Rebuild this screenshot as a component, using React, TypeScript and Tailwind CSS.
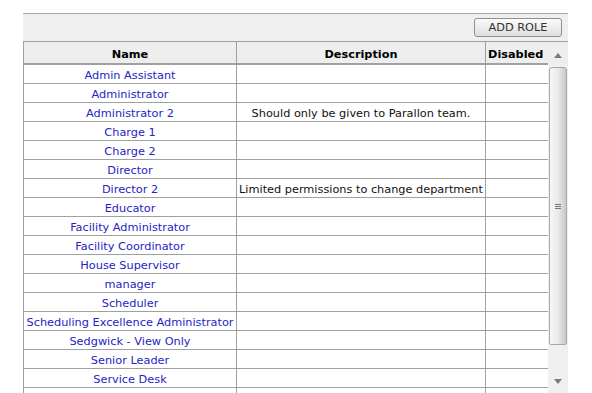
import React from "react"

type Role = { name: string; description?: string }

const roles: Role[] = [
	{ name: "Admin Assistant" },
	{ name: "Administrator" },
	{ name: "Administrator 2", description: "Should only be given to Parallon team." },
	{ name: "Charge 1" },
	{ name: "Charge 2" },
	{ name: "Director" },
	{ name: "Director 2", description: "Limited permissions to change department" },
	{ name: "Educator" },
	{ name: "Facility Administrator" },
	{ name: "Facility Coordinator" },
	{ name: "House Supervisor" },
	{ name: "manager" },
	{ name: "Scheduler" },
	{ name: "Scheduling Excellence Administrator" },
	{ name: "Sedgwick - View Only" },
	{ name: "Senior Leader" },
	{ name: "Service Desk" },
	{ name: "" },
]

function Scrollbar() {
	return (
		<div className="flex h-[351px] w-[20px] flex-col bg-[#f0f0f0]">
			<div className="flex h-[23px] items-center justify-center bg-[#eeeeee] pt-[3px]">
				<svg width="8" height="5" viewBox="0 0 8 5">
					<path d="M0 5 L4 0 L8 5 Z" fill="#7a7a7a" />
				</svg>
			</div>
			<div className="mx-[1px] mt-[2px] flex h-[278px] items-center justify-center rounded-t-[3px] rounded-b-[2px] border border-[#a9a9a9] bg-gradient-to-r from-[#f6f6f6] via-[#e9e9e9] to-[#c9c9c9]">
				<div className="flex flex-col gap-[1px]">
					<div className="h-[1px] w-[6px] bg-[#777]" />
					<div className="h-[1px] w-[6px] bg-[#777]" />
					<div className="h-[1px] w-[6px] bg-[#777]" />
				</div>
			</div>
			<div className="flex flex-1 justify-center pt-[34px]">
				<svg width="8" height="5" viewBox="0 0 8 5">
					<path d="M0 0 L8 0 L4 5 Z" fill="#7a7a7a" />
				</svg>
			</div>
		</div>
	)
}

export default function App() {
	return (
		<div
			className="h-[393px] w-[592px] overflow-hidden bg-white pl-[23px] pt-[13px] text-[11.3px]"
			style={{ fontFamily: "'DejaVu Sans', Verdana, sans-serif" }}
		>
			<div className="w-[545px]">
				<div className="flex h-[28px] items-center justify-end border-t border-[#a8a8a8] bg-[#efefef] pr-[6px]">
					<button
						type="button"
						className="h-[19px] w-[88px] rounded-[3px] border border-[#8f8f8f] bg-gradient-to-b from-[#fbfbfb] to-[#dedede] pt-[1px] text-[11.3px] leading-none text-[#333]"
					>
						ADD ROLE
					</button>
				</div>
				<div className="flex items-start border-t border-[#a0a0a0]">
					<div className="w-[525px] border-l border-[#a0a0a0]">
						<div className="flex h-[23px] border-b-2 border-[#a0a0a0] bg-[#eeeeee] font-bold text-black">
							<div className="flex w-[213px] items-center justify-center border-r border-[#a0a0a0] pt-[5px]">Name</div>
							<div className="flex w-[249px] items-center justify-center border-r border-[#a0a0a0] pt-[5px]">Description</div>
							<div className="flex flex-1 items-center pl-[2px] pt-[5px]">Disabled</div>
						</div>
						{roles.map((role, i) => (
							<div key={i} className="flex h-[19px] border-b border-[#a0a0a0]">
								<div className="flex w-[213px] items-center justify-center whitespace-nowrap border-r border-[#a0a0a0] pt-[5px] text-[#2424c4]">
									{role.name}
								</div>
								<div className="flex w-[249px] items-center justify-center whitespace-nowrap border-r border-[#a0a0a0] pt-[5px] text-[#111]">
									{role.description}
								</div>
								<div className="flex-1" />
							</div>
						))}
					</div>
					<Scrollbar />
				</div>
			</div>
		</div>
	)
}
